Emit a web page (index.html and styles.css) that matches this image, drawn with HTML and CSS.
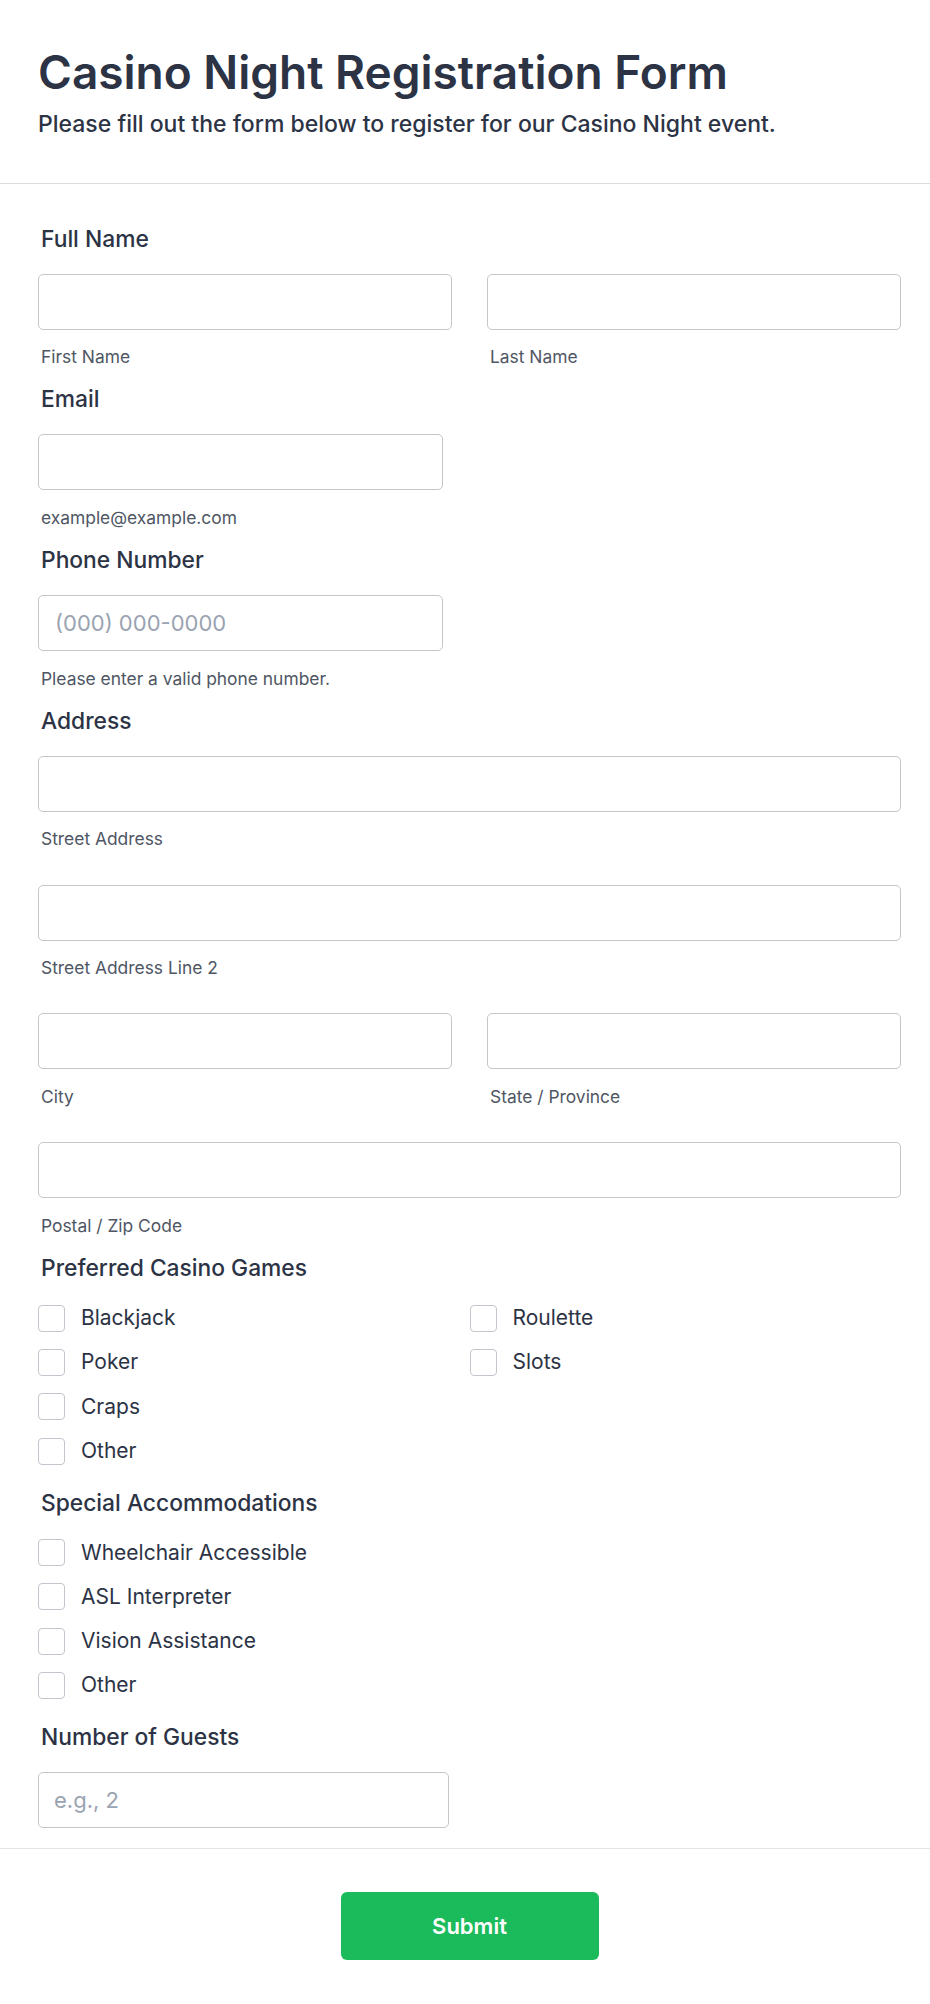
FILE: index.html
```html
<!DOCTYPE html>
<html lang="en">
<head>
<meta charset="utf-8">
<title>Casino Night Registration Form</title>
<link rel="stylesheet" href="styles.css">
</head>
<body>
<header class="form-header">
  <h1 class="form-title">Casino Night Registration Form</h1>
  <p class="form-subtitle">Please fill out the form below to register for our Casino Night event.</p>
</header>
<main class="form-body">
  <div class="field">
    <label class="field-label">Full Name</label>
    <div class="grid-2">
      <div class="sub">
        <input class="text-input" type="text">
        <span class="sublabel">First Name</span>
      </div>
      <div class="sub">
        <input class="text-input" type="text">
        <span class="sublabel">Last Name</span>
      </div>
    </div>
  </div>

  <div class="field">
    <label class="field-label">Email</label>
    <input class="text-input w-short" type="email">
    <span class="sublabel">example@example.com</span>
  </div>

  <div class="field">
    <label class="field-label">Phone Number</label>
    <input class="text-input w-short" type="tel" placeholder="(000) 000-0000">
    <span class="sublabel">Please enter a valid phone number.</span>
  </div>

  <div class="field">
    <label class="field-label">Address</label>
    <div class="addr-row">
      <input class="text-input" type="text">
      <span class="sublabel">Street Address</span>
    </div>
    <div class="addr-row">
      <input class="text-input" type="text">
      <span class="sublabel">Street Address Line 2</span>
    </div>
    <div class="addr-row grid-2">
      <div class="sub">
        <input class="text-input" type="text">
        <span class="sublabel">City</span>
      </div>
      <div class="sub">
        <input class="text-input" type="text">
        <span class="sublabel">State / Province</span>
      </div>
    </div>
    <div class="addr-row">
      <input class="text-input" type="text">
      <span class="sublabel">Postal / Zip Code</span>
    </div>
  </div>

  <div class="field field-checks">
    <label class="field-label">Preferred Casino Games</label>
    <div class="checks two">
      <label class="check"><input type="checkbox"><span>Blackjack</span></label>
      <label class="check"><input type="checkbox"><span>Poker</span></label>
      <label class="check"><input type="checkbox"><span>Craps</span></label>
      <label class="check"><input type="checkbox"><span>Other</span></label>
      <label class="check"><input type="checkbox"><span>Roulette</span></label>
      <label class="check"><input type="checkbox"><span>Slots</span></label>
    </div>
  </div>

  <div class="field">
    <label class="field-label">Special Accommodations</label>
    <div class="checks">
      <label class="check"><input type="checkbox"><span>Wheelchair Accessible</span></label>
      <label class="check"><input type="checkbox"><span>ASL Interpreter</span></label>
      <label class="check"><input type="checkbox"><span>Vision Assistance</span></label>
      <label class="check"><input type="checkbox"><span>Other</span></label>
    </div>
  </div>

  <div class="field">
    <label class="field-label">Number of Guests</label>
    <input class="text-input w-guests" type="text" placeholder="e.g., 2">
  </div>
</main>
<footer class="form-footer">
  <button class="submit-btn" type="submit">Submit</button>
</footer>
</body>
</html>
```
FILE: styles.css
```css
* {
  box-sizing: border-box;
}

html,
body {
  margin: 0;
  padding: 0;
  background: #ffffff;
}

body {
  font-family: Inter, "Noto Sans", "Liberation Sans", sans-serif;
  color: #2c3345;
}

.form-header {
  padding: 45.4px 29px 43.4px 38px;
  border-bottom: 1px solid #dcdcdc;
}

.form-title {
  margin: 0;
  font-size: 46px;
  line-height: 55.2px;
  font-weight: 600;
  color: #2c3345;
}

.form-subtitle {
  margin: 9.5px 0 0;
  font-size: 23px;
  line-height: 29.9px;
  font-weight: 500;
  color: #2c3345;
}

.form-body {
  padding: 40.3px 29px 19.5px 38px;
}

.field {
  margin-bottom: 17px;
}

.field:last-child {
  margin-bottom: 0;
}

.field-checks {
  margin-top: 2px;
}

.field-label {
  display: block;
  padding-left: 3px;
  font-size: 22.8px;
  line-height: 28.6px;
  font-weight: 500;
  color: #2c3345;
  margin-bottom: 20.4px;
}

.text-input {
  display: block;
  width: 100%;
  height: 56px;
  margin: 0;
  padding: 0 16px;
  border: 1px solid #c4c6ca;
  border-radius: 5px;
  background: #ffffff;
  font-family: Inter, "Noto Sans", sans-serif;
  font-size: 22px;
  color: #2c3345;
  outline: none;
}

.text-input::placeholder {
  color: #9aa3b1;
}

.w-short {
  width: 405px;
}

.w-guests {
  width: 411px;
  padding-left: 15px;
}

.sublabel {
  display: block;
  padding-left: 3px;
  margin-top: 16.7px;
  font-size: 17.4px;
  line-height: 22px;
  color: #4f5664;
}

.grid-2 {
  display: grid;
  grid-template-columns: 1fr 1fr;
  column-gap: 35px;
}

.addr-row + .addr-row {
  margin-top: 34.2px;
}

.checks {
  display: grid;
  grid-auto-rows: 30.3px;
  row-gap: 14px;
  padding-bottom: 5.4px;
}

.checks.two {
  grid-template-columns: 1fr 1fr;
  grid-template-rows: repeat(4, 30.3px);
  grid-auto-flow: column;
}

.check {
  display: flex;
  align-items: center;
  gap: 16px;
  font-size: 21px;
  line-height: 30.3px;
  color: #2c3345;
}

.check input {
  appearance: none;
  -webkit-appearance: none;
  flex: none;
  width: 27px;
  height: 27px;
  margin: 0;
  border: 1px solid #c3c6cc;
  border-radius: 4px;
  background: #ffffff;
}

.form-footer {
  border-top: 1px solid #e3e4e6;
  padding: 43.3px 29px 41px 38px;
  display: flex;
  justify-content: center;
}

.submit-btn {
  width: 258px;
  height: 68px;
  border: none;
  border-radius: 6px;
  background: #1bbb5c;
  color: #ffffff;
  font-family: Inter, "Noto Sans", sans-serif;
  font-size: 22px;
  font-weight: 600;
  cursor: pointer;
}
```
